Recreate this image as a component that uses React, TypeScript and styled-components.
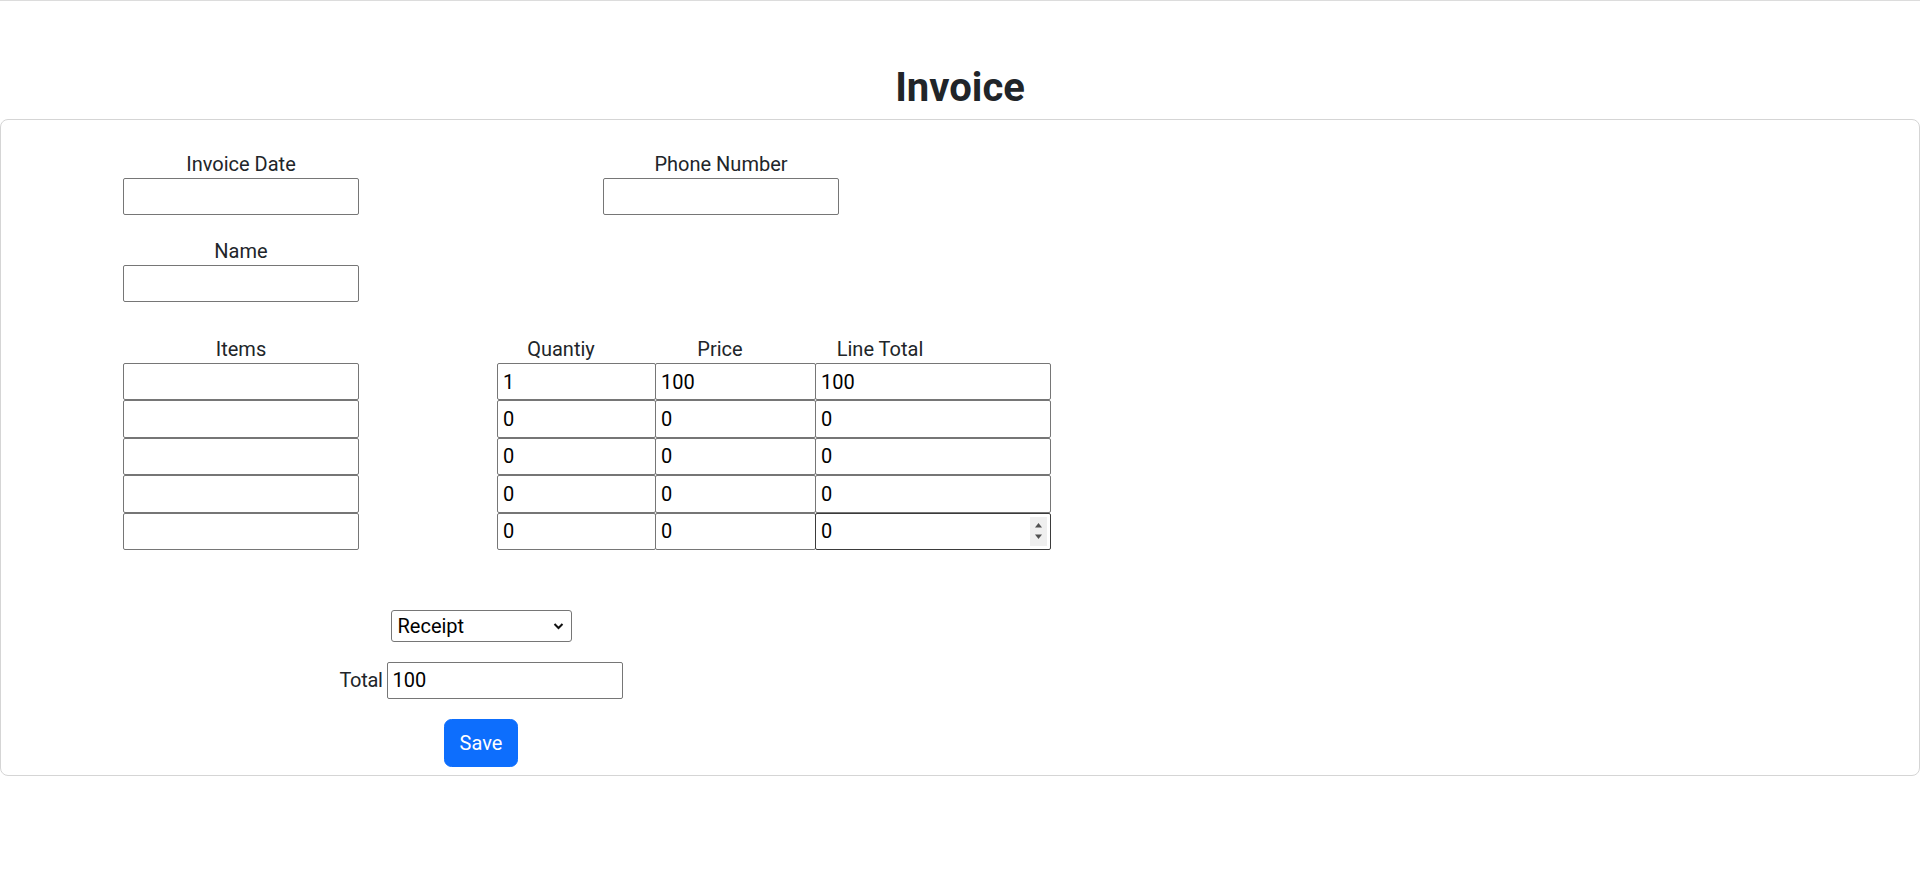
import styled, { createGlobalStyle } from 'styled-components'

const GlobalStyle = createGlobalStyle`
    html, body {
        margin:0;
        padding:0;
        background:#FFFFFF;
    }
    body {
        font-family: Roboto, "Liberation Sans", sans-serif;
        font-size:20px;
        line-height:1.5;
        color:#212529;
    }
    * {
        box-sizing:border-box;
    }
`

const Page = styled.div`
    border-top:1px solid #dcdcdc;
    padding-top:63px;
    min-height:890px;
`
const Title = styled.h2`
    margin:0 0 7px;
    text-align:center;
    font-size:40px;
    font-weight:700;
    line-height:48px;
`
const Card = styled.div`
    border:1px solid #d5d5d5;
    border-radius:8px;
    padding:29px 0 8px;
`
const FieldRow = styled.div<{ $top?: number }>`
    display:grid;
    grid-template-columns:480px 480px;
    margin-top:${p => p.$top ?? 0}px;
`
const Field = styled.div`
    text-align:center;
`
const Label = styled.label`
    display:block;
    padding-top:2px;
    line-height:27px;
    font-size:20px;
`
const TextInput = styled.input<{ $width?: number, $height?: number, $hover?: boolean }>`
    display:block;
    width:${p => p.$width ?? 236}px;
    height:${p => p.$height ?? 37}px;
    margin:0;
    padding:0 5px;
    border:1px solid ${p => p.$hover ? '#3b3b3b' : '#767676'};
    border-radius:2px;
    background:#FFFFFF;
    color:#000000;
    font-family: Roboto, "Liberation Sans", sans-serif;
    font-size:20px;
    outline:none;
`
const CenteredInput = styled(TextInput)`
    margin:0 auto;
`

//quantity / price / line total block
const LinesBlock = styled.div`
    padding-left:16px;
`
const LinesHeader = styled.div`
    display:grid;
    grid-template-columns:128px 190px 130px;
    text-align:center;
    padding-top:2px;
    line-height:27px;
`
const LineRow = styled.div`
    display:flex;
    & > * + * {
        margin-left:-1px;
    }
`
const SpinWrap = styled.div`
    position:relative;
`
const Spinner = styled.span`
    position:absolute;
    right:4px;
    top:4px;
    width:17px;
    height:29px;
    background:#efefef;
    display:flex;
    align-items:center;
    justify-content:center;
`

//select, total and save
const Bottom = styled.div`
    width:960px;
    margin-top:60px;
`
const BottomRow = styled.div<{ $top?: number }>`
    display:flex;
    justify-content:center;
    align-items:center;
    gap:4px;
    margin-top:${p => p.$top ?? 0}px;
`
const SelectWrap = styled.div`
    position:relative;
    width:181px;
    height:32px;
`
const Select = styled.select`
    appearance:none;
    width:100%;
    height:100%;
    padding:0 0 0 6px;
    border:1px solid #767676;
    border-radius:3px;
    background:#FFFFFF;
    color:#000000;
    font-family: Roboto, "Liberation Sans", sans-serif;
    font-size:20px;
`
const Chevron = styled.svg`
    position:absolute;
    right:8px;
    top:11px;
    pointer-events:none;
`
const TotalLabel = styled.span`
    font-size:20px;
    line-height:30px;
    letter-spacing:-0.3px;
`
const SaveButton = styled.button`
    height:48px;
    padding:0 15px;
    border:1px solid #0d6efd;
    border-radius:7.5px;
    background:#0d6efd;
    color:#FFFFFF;
    font-family: Roboto, "Liberation Sans", sans-serif;
    font-size:20px;
    line-height:30px;
`

type LineType = {
    quantity: string,
    price: string,
    total: string
}

const ROW_HEIGHT = 37.4

const lines: LineType[] = [
    { quantity: '1', price: '100', total: '100' },
    { quantity: '0', price: '0', total: '0' },
    { quantity: '0', price: '0', total: '0' },
    { quantity: '0', price: '0', total: '0' },
    { quantity: '0', price: '0', total: '0' },
]

export default function App() {
    return <Page>
        <GlobalStyle />
        <Title>Invoice</Title>
        <Card>
            <FieldRow>
                <Field>
                    <Label>Invoice Date</Label>
                    <CenteredInput type="text" />
                </Field>
                <Field>
                    <Label>Phone Number</Label>
                    <CenteredInput type="text" />
                </Field>
            </FieldRow>
            <FieldRow $top={21}>
                <Field>
                    <Label>Name</Label>
                    <CenteredInput type="text" />
                </Field>
            </FieldRow>
            <FieldRow $top={32}>
                <Field>
                    <Label>Items</Label>
                    {lines.map((_, index) => <CenteredInput key={'item-' + index} type="text" $height={ROW_HEIGHT} />)}
                </Field>
                <LinesBlock>
                    <LinesHeader>
                        <span>Quantiy</span>
                        <span>Price</span>
                        <span>Line Total</span>
                    </LinesHeader>
                    {
                        lines.map((line, index) => {
                            const isLast = index === lines.length - 1
                            return <LineRow key={'line-' + index}>
                                <TextInput type="text" $width={159} $height={ROW_HEIGHT} defaultValue={line.quantity} />
                                <TextInput type="text" $width={161} $height={ROW_HEIGHT} defaultValue={line.price} />
                                <SpinWrap>
                                    <TextInput type="text" $width={236} $height={ROW_HEIGHT} $hover={isLast} defaultValue={line.total} />
                                    {isLast &&
                                        <Spinner>
                                            <svg width="9" height="22" viewBox="0 0 9 22">
                                                <path d="M4.5 3 L8 7.5 L1 7.5 Z" fill="#505050" />
                                                <path d="M1 14.5 L8 14.5 L4.5 19 Z" fill="#505050" />
                                            </svg>
                                        </Spinner>
                                    }
                                </SpinWrap>
                            </LineRow>
                        })
                    }
                </LinesBlock>
            </FieldRow>
            <Bottom>
                <BottomRow>
                    <SelectWrap>
                        <Select defaultValue="Receipt">
                            <option>Receipt</option>
                            <option>Invoice</option>
                        </Select>
                        <Chevron width="11" height="10" viewBox="0 0 11 10">
                            <path d="M1.5 3 L5.5 7 L9.5 3" fill="none" stroke="#111" strokeWidth="2" />
                        </Chevron>
                    </SelectWrap>
                </BottomRow>
                <BottomRow $top={20}>
                    <TotalLabel>Total</TotalLabel>
                    <TextInput type="text" defaultValue="100" />
                </BottomRow>
                <BottomRow $top={20}>
                    <SaveButton>Save</SaveButton>
                </BottomRow>
            </Bottom>
        </Card>
    </Page>
}
